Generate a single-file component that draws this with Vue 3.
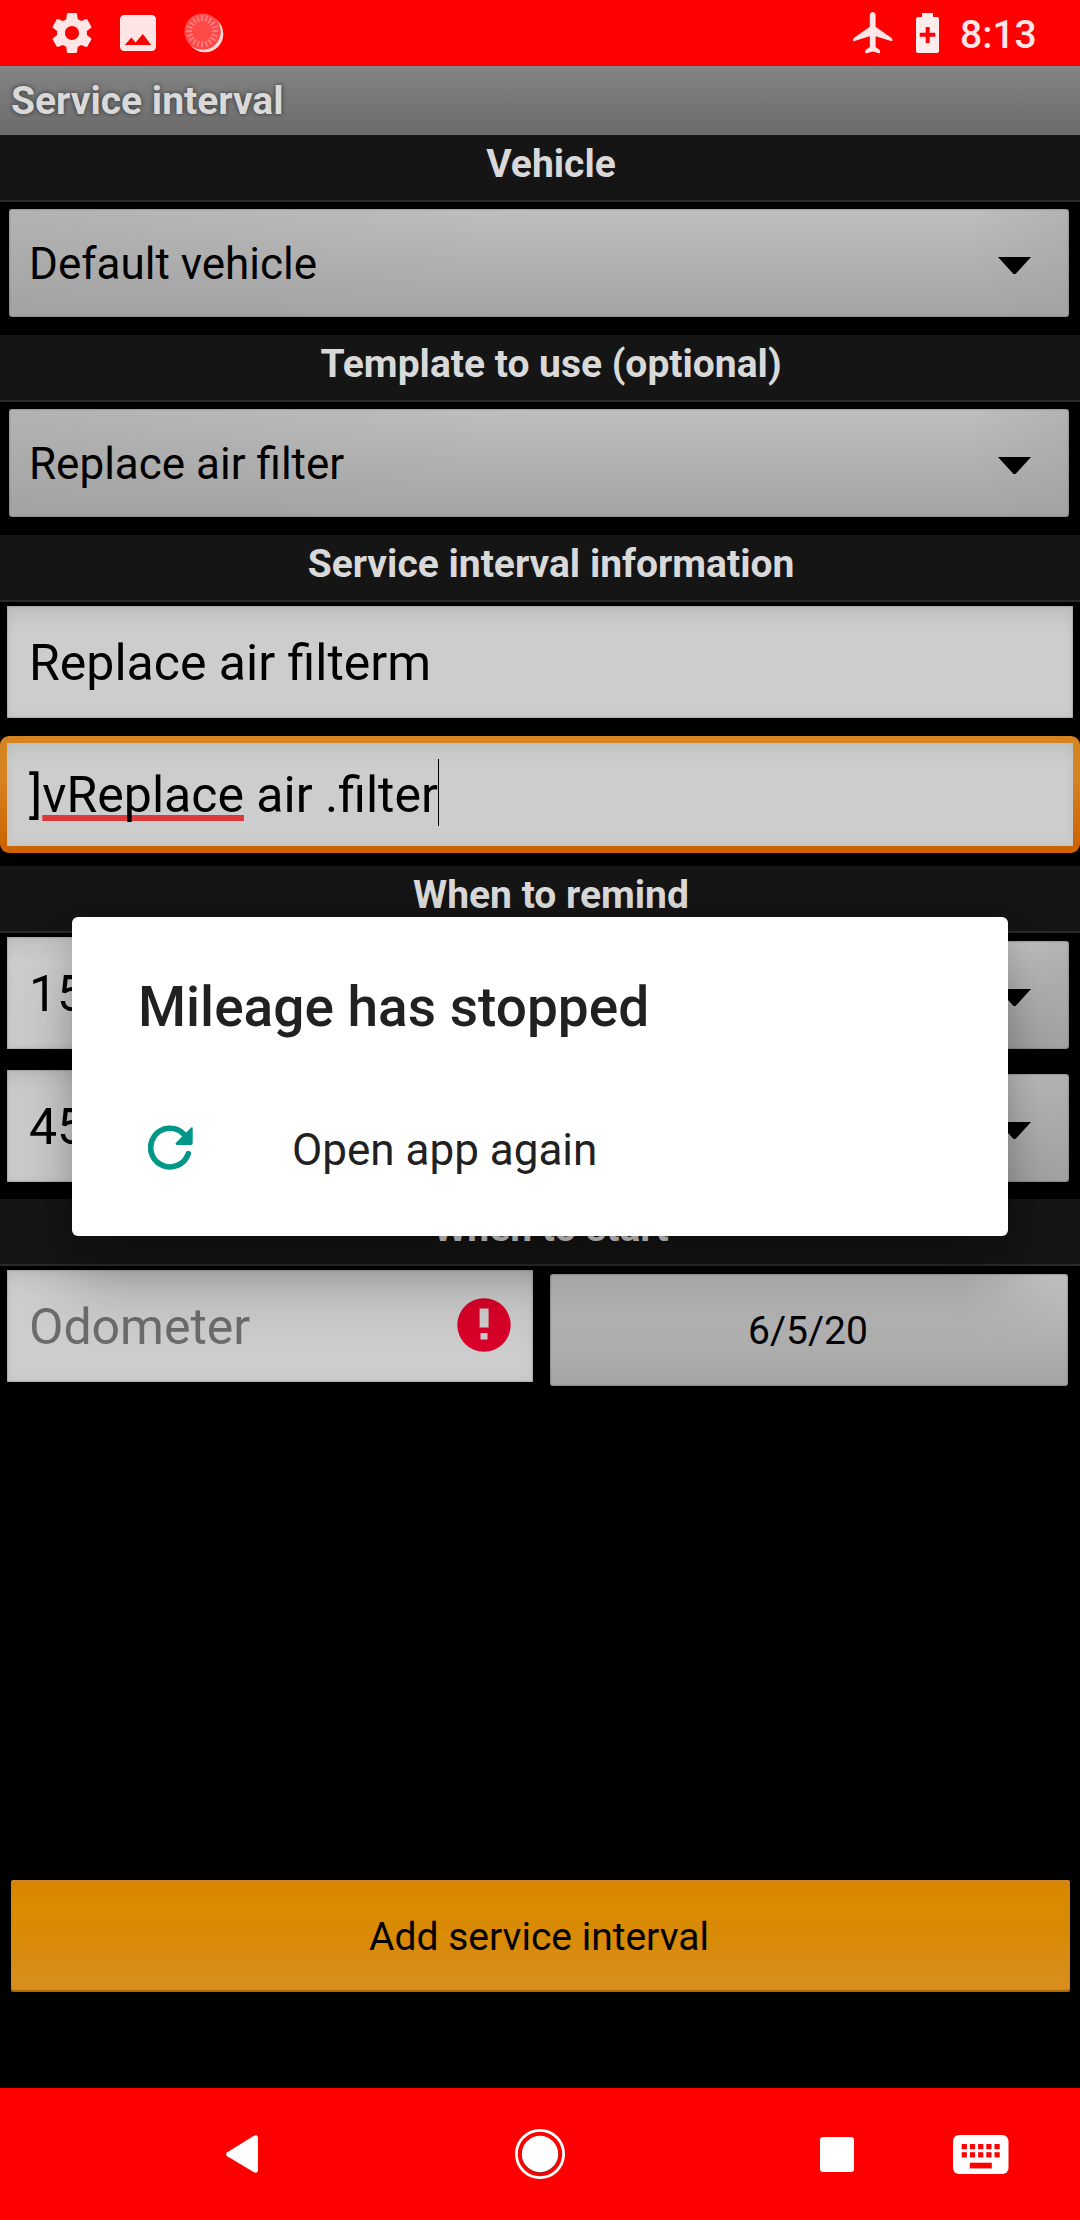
<script setup>
const keys = [0, 1, 2, 3, 4].flatMap((c) => [0, 1].map((r) => ({ x: 8.7 + c * 8.2, y: 9 + r * 8.2 })))
const ticks = Array.from({ length: 20 }, (_, i) => i * 18)
</script>

<template>
  <div class="screen">
    <div class="status">
      <svg class="ic" viewBox="0 0 24 24"><path fill="#ffe5e5" d="M19.43 12.98c.04-.32.07-.64.07-.98s-.03-.66-.07-.98l2.11-1.65c.19-.15.24-.42.12-.64l-2-3.46c-.12-.22-.39-.3-.61-.22l-2.49 1c-.52-.4-1.08-.73-1.69-.98l-.38-2.65C14.46 2.18 14.25 2 14 2h-4c-.25 0-.46.18-.49.42l-.38 2.65c-.61.25-1.17.59-1.69.98l-2.49-1c-.23-.09-.49 0-.61.22l-2 3.46c-.13.22-.07.49.12.64l2.11 1.65c-.04.32-.07.65-.07.98s.03.66.07.98l-2.11 1.65c-.19.15-.24.42-.12.64l2 3.46c.12.22.39.3.61.22l2.49-1c.52.4 1.08.73 1.69.98l.38 2.65c.03.24.24.42.49.42h4c.25 0 .46-.18.49-.42l.38-2.65c.61-.25 1.17-.59 1.69-.98l2.49 1c.23.09.49 0 .61-.22l2-3.46c.12-.22.07-.49-.12-.64l-2.11-1.65zM12 15.5c-1.93 0-3.5-1.57-3.5-3.5s1.57-3.5 3.5-3.5 3.5 1.57 3.5 3.5-1.57 3.5-3.5 3.5z" /></svg>
      <svg class="ic" viewBox="0 0 24 24"><path fill="#ffe5e5" d="M21 19V5c0-1.1-.9-2-2-2H5c-1.1 0-2 .9-2 2v14c0 1.1.9 2 2 2h14c1.1 0 2-.9 2-2zM8.7 14.2l2.1 2.6 3.6-4.3 4.2 5.500H5.400z" /></svg>
      <svg class="ic" viewBox="0 0 48 48">
        <circle cx="25" cy="25" r="18.3" fill="#ffd9d9" />
        <circle cx="22.6" cy="22.6" r="18.2" fill="#ff4a4a" />
        <path v-for="t in ticks" :key="t" d="M22.200 6v6" stroke="#ff8282" stroke-width="1.700" :transform="`rotate(${t} 22.2 22.2)`" />
      </svg>
      <span class="grow"></span>
      <svg class="plane" viewBox="0 0 40 42"><path fill="#ffe5e5" d="M16.8 3.4C16.8 1.4 18 0 19.7 0s2.9 1.400 2.900 3.400V14.800L38.200 25.800Q39.400 26.700 39.400 28V28.600Q39.200 29.500 38 29.100L22.600 24.300V35L26.400 37.800Q27 38.300 27 39V40.600Q27 41.600 25.900 41.300L19.700 39.600 13.500 41.300Q12.300 41.600 12.300 40.600V39Q12.300 38.300 13 37.800L16.800 35V24.300L1.500 29.100Q.2 29.500 0 28.600V28Q0 26.700 1.200 25.800L16.800 14.800Z" /></svg>
      <svg class="batt" viewBox="0 0 23 40"><path fill="#ffecec" fill-rule="evenodd" d="M6 0H17V4H21Q23 4 23 6V38Q23 40 21 40H2Q0 40 0 38V6Q0 4 2 4H6ZM9.700 14V19.700H3.700V23.800H9.700V30H13.700V23.800H19.300V19.700H13.700V14Z" /></svg>
      <span class="clock">8:13</span>
    </div>
    <div class="title">Service interval</div>

    <div class="head">Vehicle</div>
    <div class="body one">
      <div class="spinner"><span>Default vehicle</span><i class="arrow"></i></div>
    </div>

    <div class="head">Template to use (optional)</div>
    <div class="body one">
      <div class="spinner"><span>Replace air filter</span><i class="arrow"></i></div>
    </div>

    <div class="head">Service interval information</div>
    <div class="body info">
      <div class="input">Replace air filterm</div>
      <div class="focus"><div class="field"><span>]<span class="typo">vReplace</span> air .filter</span><i class="caret"></i></div></div>
    </div>

    <div class="head">When to remind</div>
    <div class="body remind">
      <div class="row"><div class="input half">15</div><div class="spinner"><i class="arrow"></i></div></div>
      <div class="row"><div class="input half">45</div><div class="spinner"><i class="arrow"></i></div></div>
    </div>

    <div class="head">When to start</div>
    <div class="body start">
      <div class="input half hint">
        <span>Odometer</span>
        <svg class="err" viewBox="0 0 54 54"><circle cx="27" cy="27" r="26.700" fill="#d90029" /><path fill="#cdcdcd" d="M22.600 10.500h9v19h-9zM23.500 35h7v6.500h-7z" /></svg>
      </div>
      <div class="date">6/5/20</div>
    </div>

    <div class="add">Add service interval</div>

    <div class="nav">
      <svg class="back" viewBox="0 0 32 38"><path fill="#fff" d="M1.300 17.200 27.500.900Q32 -1 32 3.500V34.500Q32 39 27.500 37.100L1.300 21.200Q-1 19.200 1.300 17.200Z" /></svg>
      <svg class="home" viewBox="0 0 50 50"><circle cx="25" cy="25" r="23.600" fill="none" stroke="#fff" stroke-width="2.800" /><circle cx="25" cy="25.500" r="18.600" fill="#8f2020" /><circle cx="25" cy="25" r="18.200" fill="#fff" /></svg>
      <span class="recent"></span>
      <svg class="kbd" viewBox="0 0 56 39">
        <rect width="55.500" height="39" rx="6" fill="#fff" />
        <rect v-for="(k, i) in keys" :key="i" :x="k.x" :y="k.y" width="5.200" height="5.200" fill="#f00" />
        <rect x="16.800" y="27.700" width="22" height="5.700" fill="#f00" />
      </svg>
    </div>

    <div class="dialog">
      <div class="dtitle">Mileage has stopped</div>
      <div class="action">
        <svg viewBox="0 0 46 46">
          <path d="M40.300 28.600A19.300 19.300 0 1 1 35.600 8.900" fill="none" stroke="#009688" stroke-width="5.600" stroke-linecap="round" />
          <path d="M44.700 3.200V18.200Q44.700 20 43 20H29Q26.500 19.500 28.200 17.600L43.200 2.600Q44.700 1.800 44.700 3.200Z" fill="#009688" />
        </svg>
        <span>Open app again</span>
      </div>
    </div>
  </div>
</template>

<style>
body {
  margin: 0;
  background: #000;
}
</style>

<style scoped>
.screen {
  position: relative;
  width: 1080px;
  height: 2220px;
  background: #000;
  overflow: hidden;
  display: flex;
  flex-direction: column;
  font-family: Roboto, "Liberation Sans", sans-serif;
  color: #000;
  white-space: nowrap;
}
.screen > div {
  flex-shrink: 0;
  box-sizing: border-box;
}
.status {
  height: 66px;
  background: #f00;
  display: flex;
  padding: 0 44px 0 48px;
}
.ic {
  width: 48px;
  height: 48px;
  margin: 9px 18px 0 0;
}
.grow {
  flex: 1;
}
.plane {
  width: 40px;
  height: 42px;
  margin: 12px 23px 0 0;
}
.batt {
  width: 23px;
  height: 40px;
  margin: 13px 21px 0 0;
}
.clock {
  width: 76px;
  font-size: 39px;
  line-height: 70px;
  font-weight: 500;
  color: #ffe5e5;
}
.title {
  height: 69px;
  padding-left: 11px;
  background: linear-gradient(#848484, #6b6b6b);
  color: #d9d9d9;
  font-size: 39px;
  font-weight: 700;
  line-height: 70px;
  text-shadow: 0 0 5px rgba(0, 0, 0, 0.6);
}
.head {
  height: 67px;
  padding-left: 22px;
  text-align: center;
  background: #151515;
  border-bottom: 2px solid #2a2a2a;
  color: #d9d9d9;
  font-size: 39px;
  font-weight: 700;
  line-height: 58px;
}
.body {
  display: flex;
}
.one {
  height: 133px;
  padding: 7px 11px 18px 9px;
}
.spinner {
  flex: 1;
  height: 108px;
  box-sizing: border-box;
  border-radius: 3px;
  display: flex;
  justify-content: space-between;
  padding: 0 38px 0 20px;
  font-size: 44px;
  line-height: 111px;
  background:
    linear-gradient(90deg, rgba(160, 160, 160, 0.4), rgba(160, 160, 160, 0) 50%, rgba(160, 160, 160, 0) 90%, rgba(160, 160, 160, 0.4)),
    linear-gradient(#bfbfbf, #a4a4a4);
  box-shadow: inset 0 0 2px rgba(70, 70, 70, 0.8);
}
.arrow {
  width: 33px;
  height: 17px;
  margin: 48px 0 0 auto;
  background: #000;
  clip-path: polygon(0 0, 100% 0, 53% 100%, 47% 100%);
}
.info {
  height: 264px;
  flex-direction: column;
  padding-top: 4px;
}
.input {
  height: 112px;
  box-sizing: border-box;
  margin: 0 7px;
  padding: 0 22px;
  font-size: 50px;
  line-height: 114px;
  background: linear-gradient(#c2c2c2, #cdcdcd 25px);
  box-shadow: inset 0 0 2px #777, inset 0 0 12px rgba(0, 0, 0, 0.06);
}
.focus {
  height: 117px;
  box-sizing: border-box;
  margin-top: 18px;
  padding: 7px;
  border-radius: 9px;
  background: linear-gradient(#d68420 35%, #cc6300 95%);
}
.field {
  height: 103px;
  padding-left: 22px;
  display: flex;
  font-size: 50px;
  line-height: 104px;
  background: linear-gradient(#c4c5c5, #cdcdcd 24px);
  box-shadow: inset 0 0 12px rgba(0, 0, 0, 0.06);
}
.typo {
  text-decoration: underline #dc3a3a 6px;
  text-underline-offset: 3px;
  text-decoration-skip-ink: none;
}
.caret {
  width: 1px;
  height: 67px;
  margin-top: 16px;
  background: #000;
}
.remind {
  height: 266px;
  flex-direction: column;
  padding-top: 4px;
  gap: 21px;
}
.row {
  display: flex;
  align-items: flex-end;
  padding-right: 11px;
}
.half {
  width: 526px;
  margin-right: 17px;
}
.start {
  padding-top: 4px;
  height: 614px;
}
.hint {
  display: flex;
  justify-content: space-between;
  color: #6c6c6c;
}
.err {
  width: 54px;
  height: 54px;
  margin-top: 28px;
}
.date {
  width: 518px;
  height: 112px;
  margin-top: 4px;
  padding-right: 2px;
  box-sizing: border-box;
  border-radius: 3px;
  text-align: center;
  font-size: 39px;
  line-height: 114px;
  background: linear-gradient(#c0c0c0, #a4a4a4);
  box-shadow: inset 0 0 2px rgba(70, 70, 70, 0.8);
}
.add {
  height: 112px;
  margin: 0 10px 96px 11px;
  padding-right: 3px;
  border-radius: 3px;
  text-align: center;
  font-size: 39px;
  line-height: 115px;
  background: linear-gradient(#d98400, #da8b00 20%, #d98a05 45%, #d68e20);
  box-shadow: inset 0 2px 1px #c98a30, inset 0 -2px 1px #a86800;
}
.nav {
  height: 132px;
  background: #f00;
  display: flex;
  align-items: center;
  padding-left: 226px;
}
.back {
  width: 32px;
  height: 38px;
  margin-right: 257px;
}
.home {
  width: 50px;
  height: 50px;
  margin-right: 255px;
}
.recent {
  width: 34px;
  height: 35px;
  border-radius: 3px;
  background: #fff;
  margin-right: 99px;
}
.kbd {
  width: 56px;
  height: 39px;
}
.dialog {
  position: absolute;
  left: 72px;
  top: 917px;
  width: 936px;
  height: 319px;
  border-radius: 6px;
  background: #fff;
  color: #212121;
  box-shadow: 0 48px 66px rgba(0, 0, 0, 0.24), 0 0 30px rgba(0, 0, 0, 0.12);
}
.dtitle {
  padding-left: 66px;
  font-size: 55px;
  font-weight: 500;
  line-height: 180px;
}
.action {
  display: flex;
  align-items: center;
  height: 106px;
  padding-left: 76px;
  font-size: 44px;
}
.action svg {
  width: 46px;
  height: 46px;
  margin: -4px 98px 0 0;
}
</style>
